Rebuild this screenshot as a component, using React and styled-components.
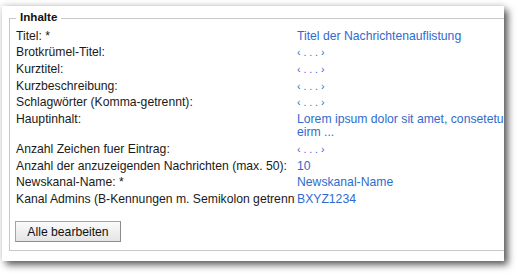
import styled, { createGlobalStyle } from "styled-components";

const GlobalStyle = createGlobalStyle`
  body {
    margin: 0;
    background: #ffffff;
    font-family: "Liberation Sans", Arial, sans-serif;
  }
`;

const Page = styled.div`
  padding: 6px 0 0 2px;
  height: 275px;
  box-sizing: border-box;
  overflow: hidden;
`;

const Frame = styled.div`
  width: 502px;
  height: 255px;
  background: #ffffff;
  overflow: hidden;
  box-shadow: 4px 4px 7px rgba(0, 0, 0, 0.62), 0 -1px 6px rgba(0, 0, 0, 0.14);
`;

const Fieldset = styled.fieldset`
  margin: 4px 0 0 7px;
  padding: 0 6px 8px 6px;
  width: 720px;
  border: 1px solid #c8c8c8;
  box-sizing: border-box;
`;

const Legend = styled.legend`
  padding: 0 4px 4px;
  font-size: 11.6px;
  font-weight: bold;
  color: #111;
`;

const Grid = styled.div`
  display: grid;
  grid-template-columns: 279px 410px;
  column-gap: 2px;
  margin-top: 1.2px;
`;

const Label = styled.div`
  font-size: 12.2px;
  line-height: 13.6px;
  padding: 1.53px 0;
  color: #1a1a1a;
  white-space: nowrap;
  overflow: hidden;
`;

const Value = styled.div`
  font-size: ${(p) => (p.$empty ? "10.5px" : "12.2px")};
  line-height: 13.6px;
  padding: 1.53px 0;
  color: #2f6bcd;
`;

const Button = styled.button`
  margin: 13px 0 0 -1px;
  width: 106px;
  height: 21px;
  padding: 0;
  font-family: "Liberation Sans", Arial, sans-serif;
  font-size: 12.2px;
  color: #111;
  background: linear-gradient(#fbfbfb, #e4e4e4);
  border: 1px solid #a4a4a4;
  border-right-color: #8c8c8c;
  border-bottom-color: #8c8c8c;
  border-radius: 0;
`;

const EMPTY = "\u2039 . . . \u203a";

const rows = [
  ["Titel: *", "Titel der Nachrichtenauflistung"],
  ["Brotkrümel-Titel:", null],
  ["Kurztitel:", null],
  ["Kurzbeschreibung:", null],
  ["Schlagwörter (Komma-getrennt):", null],
  [
    "Hauptinhalt:",
    "Lorem ipsum dolor sit amet, consetetur sadipscing elitr, sed diam nonumy eirm ...",
  ],
  ["Anzahl Zeichen fuer Eintrag:", null],
  ["Anzahl der anzuzeigenden Nachrichten (max. 50):", "10"],
  ["Newskanal-Name: *", "Newskanal-Name"],
  ["Kanal Admins (B-Kennungen m. Semikolon getrennt):", "BXYZ1234"],
];

const App = () => {
  return (
    <>
      <GlobalStyle />
      <Page>
        <Frame>
          <Fieldset>
            <Legend>Inhalte</Legend>
            <Grid>
              {rows.map(([label, value]) => (
                <>
                  <Label key={label + "-l"}>{label}</Label>
                  <Value key={label + "-v"} $empty={!value}>
                    {value || EMPTY}
                  </Value>
                </>
              ))}
            </Grid>
            <Button type="button">Alle bearbeiten</Button>
          </Fieldset>
        </Frame>
      </Page>
    </>
  );
};

export default App;
